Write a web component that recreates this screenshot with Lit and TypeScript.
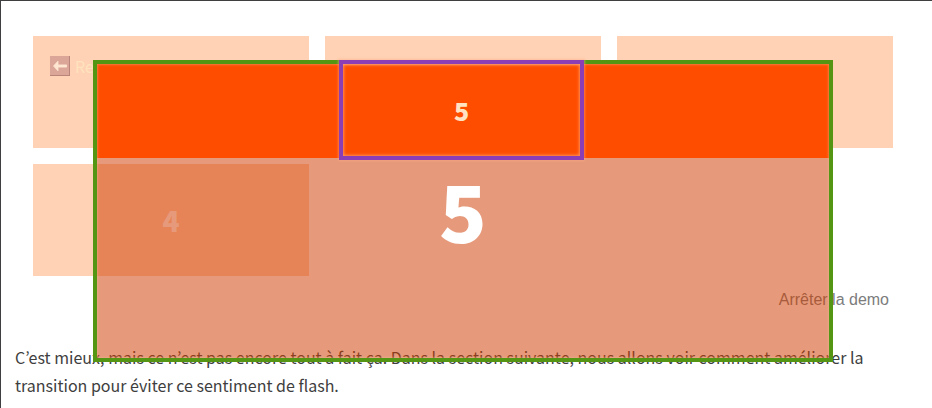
import { LitElement, html, css, svg } from "lit";
import { customElement } from "lit/decorators.js";

const backIcon = svg`
  <svg class="icon" viewBox="0 0 20 20" aria-hidden="true">
    <rect width="20" height="20" fill="#b98479" />
    <rect width="19" height="19" fill="#dba598" />
    <path d="M3.5 10 L8 5.2 L8 8.9 L16.6 8.9 L16.6 11.1 L8 11.1 L8 14.8 Z" fill="#ffe6d2" stroke="#ffe6d2" stroke-width="0.8" stroke-linejoin="round" />
  </svg>`;

@customElement("app-root")
export class AppRoot extends LitElement {
  static styles = css`
    :host {
      display: block;
      box-sizing: border-box;
      min-height: 100vh;
      overflow: hidden;
      border-top: 1px solid #3f3f42;
      border-left: 1px solid #3f3f42;
      background: #fff;
      color: #3e3e3e;
      font-family: "Noto Sans CJK KR", "Noto Sans", sans-serif;
    }
    .demo {
      position: relative;
      padding: 35px 39px 0 32px;
    }
    .cards {
      display: grid;
      grid-template-columns: repeat(3, 1fr);
      grid-auto-rows: 112px;
      gap: 16px;
    }
    .card {
      display: flex;
      align-items: center;
      justify-content: center;
      background: #ffd2b5;
      color: #fff;
      font-size: 28px;
      font-weight: 900;
      line-height: 40px;
    }
    .card.first {
      align-items: flex-start;
      justify-content: flex-start;
      padding: 16px;
    }
    .back {
      display: flex;
      align-items: center;
      gap: 5px;
      color: #ffe3bd;
      font-size: 16px;
      font-weight: 400;
      line-height: 28px;
      text-decoration: none;
    }
    .icon {
      width: 20px;
      height: 20px;
      margin-left: 1px;
    }
    .actions {
      display: flex;
      justify-content: flex-end;
      padding: 12px 4px 0 0;
    }
    .stop {
      padding: 0;
      border: 0;
      background: none;
      color: #7c7c7c;
      font: 16px/24px "Liberation Sans", Arial, sans-serif;
    }
    .overlay {
      position: absolute;
      top: 59px;
      left: 92px;
      right: 99px;
      height: 302px;
      box-sizing: border-box;
      border: 4px solid #549614;
      background: rgba(207, 61, 1, 0.52);
      background-clip: padding-box;
    }
    .overlay::after {
      content: "";
      position: absolute;
      inset: 0;
      box-shadow: inset 0 0 2px 1px rgba(240, 190, 150, 0.4);
      pointer-events: none;
    }
    .strip {
      display: grid;
      grid-template-columns: 242fr 245fr 245fr;
      height: 94px;
      background: #ff4d00;
    }
    .focus {
      position: relative;
      z-index: 1;
      display: flex;
      align-items: center;
      justify-content: center;
      box-sizing: border-box;
      height: 100px;
      margin-top: -4px;
      border: 4px solid #8c3fb4;
      box-shadow:
        0 0 2px 1px rgba(255, 170, 130, 0.5),
        inset 0 0 3px 1px rgba(255, 190, 150, 0.6);
      color: #ffe3c2;
      font-size: 25px;
      font-weight: 900;
      line-height: 36px;
      grid-column: 2;
    }
    .big {
      color: #fff;
      font-size: 78px;
      font-weight: 900;
      line-height: 102px;
      text-align: center;
    }
    .text {
      margin: 0;
      padding: 31px 40px 0 14px;
      font-size: 16px;
      font-weight: 400;
      line-height: 28px;
    }
  `;

  render() {
    return html`
      <section class="demo">
        <div class="cards">
          <div class="card first"><a class="back" href="#">${backIcon}Retour</a></div>
          <div class="card"></div>
          <div class="card"></div>
          <div class="card">4</div>
        </div>
        <div class="actions">
          <button class="stop" type="button">Arrêter la demo</button>
        </div>
        <div class="overlay">
          <div class="strip"><div class="focus">5</div></div>
          <div class="big">5</div>
        </div>
      </section>
      <p class="text">
        C’est mieux, mais ce n’est pas encore tout à fait ça. Dans la section suivante, nous
        allons voir comment améliorer la transition pour éviter ce sentiment de flash.
      </p>
    `;
  }
}
